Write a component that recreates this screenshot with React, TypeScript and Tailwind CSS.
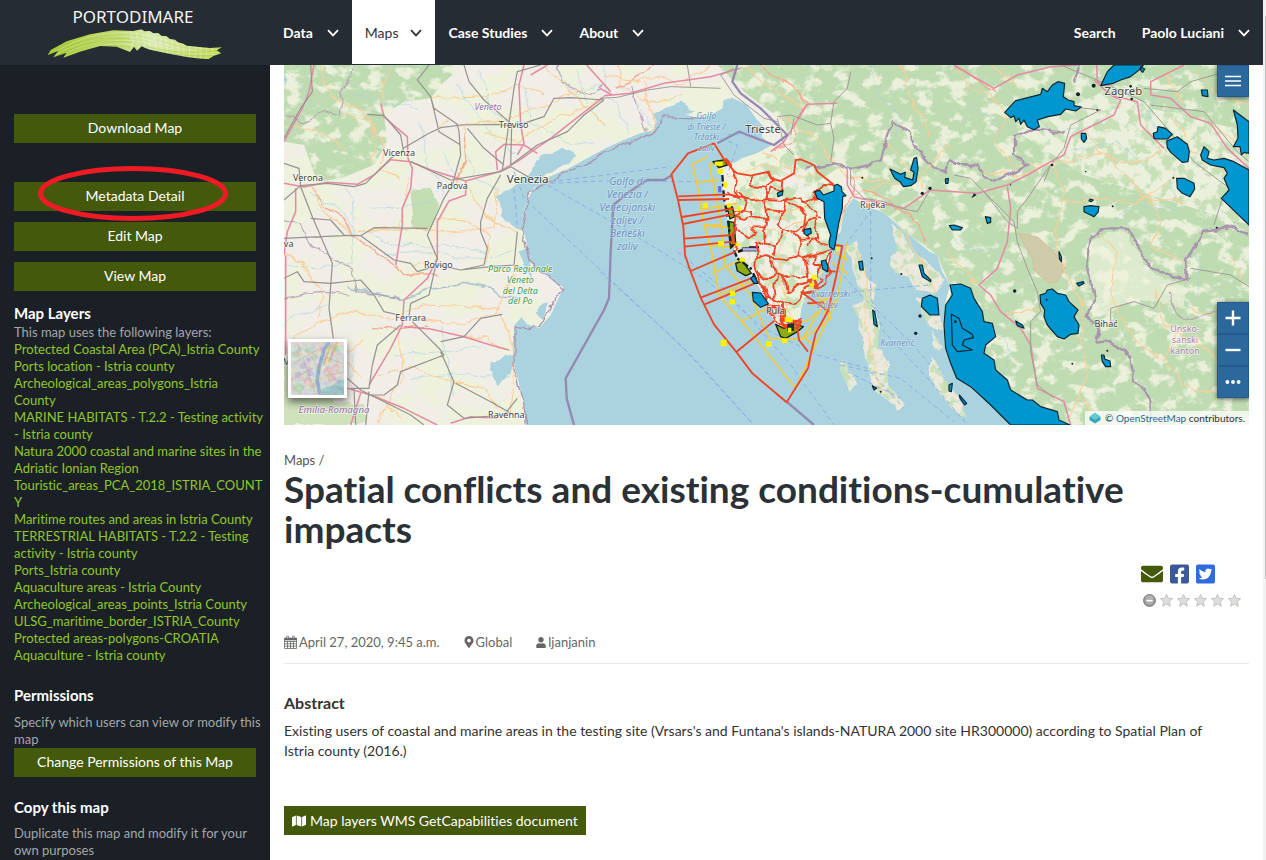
import React from "react";
import { FaEnvelope, FaFacebookSquare, FaMap, FaMapMarkerAlt, FaTwitterSquare, FaUser } from "react-icons/fa";

const layers = [
  "Protected Coastal Area (PCA)_Istria County",
  "Ports location - Istria county",
  "Archeological_areas_polygons_Istria\nCounty",
  "MARINE HABITATS - T.2.2 - Testing activity\n- Istria county",
  "Natura 2000 coastal and marine sites in the\nAdriatic Ionian Region",
  "Touristic_areas_PCA_2018_ISTRIA_COUNT\nY",
  "Maritime routes and areas in Istria County",
  "TERRESTRIAL HABITATS - T.2.2 - Testing\nactivity - Istria county",
  "Ports_Istria county",
  "Aquaculture areas - Istria County",
  "Archeological_areas_points_Istria County",
  "ULSG_maritime_border_ISTRIA_County",
  "Protected areas-polygons-CROATIA",
  "Aquaculture - Istria county",
];

function Chevron() {
  return (
    <svg viewBox="0 0 12 8" className="h-2 w-3" fill="none" stroke="currentColor" strokeWidth="1.8" aria-hidden="true">
      <path d="M1 1.2 6 6.4 11 1.2" />
    </svg>
  );
}

function Logo() {
  const ribs = Array.from({ length: 15 }, (_, i) => 405 + i * 17);
  return (
    <a href="#" className="flex w-[270px] shrink-0 flex-col items-center pt-1.5 text-white">
      <span className="pr-1 font-['Noto_Sans',sans-serif] text-[17px] font-normal leading-[22px] text-gray-100">PORTODIMARE</span>
      <svg viewBox="141 84 528 96" className="h-8 w-44" aria-hidden="true">
        <defs>
          <linearGradient id="wave" x1="0" x2="1">
            <stop offset="0" stopColor="#a3c832" />
            <stop offset=".4" stopColor="#c0da6c" />
            <stop offset=".6" stopColor="#d8e9ac" />
            <stop offset="1" stopColor="#bcd64c" />
          </linearGradient>
          <clipPath id="waveClip">
            <path d="M143 166 152 150 200 124 270 103 340 91 400 93 424 88 434 94 450 93 460 100 474 99 484 107 500 109 510 117 525 119 534 127 550 131 560 137 630 144 666 142 650 151 664 160 640 168 625 178 590 175 560 171 500 160 450 149 436 144 425 139 411 152 402 140 390 156 350 140 300 138 240 155 190 173 200 158 160 172 175 152Z" />
          </clipPath>
        </defs>
        <g clipPath="url(#waveClip)">
          <rect x="141" y="84" width="528" height="96" fill="url(#wave)" />
          <g fill="none" stroke="#fff" strokeOpacity=".6" strokeWidth="1.6">
            <path d="M145 170C230 110 320 92 405 100S540 150 668 148M155 172C235 122 320 104 400 112S540 162 668 156M172 172C245 132 320 116 400 122S540 168 668 164M190 172C255 142 320 126 400 134" />
            {ribs.map((x) => (
              <path key={x} d={`M${x - 20} 84Q${x} 120 ${x - 8} 180`} />
            ))}
          </g>
          <g fill="none" stroke="#9cc02c" strokeOpacity=".6" strokeWidth="2">
            <path d="M150 168C220 125 300 106 390 116M165 172C240 130 310 116 395 127M185 174C250 142 320 128 390 142M440 140C510 156 570 162 655 152M450 148C520 166 580 170 640 166" />
          </g>
        </g>
      </svg>
    </a>
  );
}

const westLand =
  "M0 0H2895V1080H2188L2140 1030 2040 945 1998 880 1983 800 1983 720 1998 660 1975 620 1958 568 1938 560 1888 520 1850 470 1810 445 1748 425 1708 400 1678 440 1670 500 1640 530 1633 565 1638 600 1598 640 1575 682 1553 722 1545 780 1508 792 1478 780 1448 730 1440 692 1415 650 1363 595 1348 545 1333 490 1328 440 1318 390 1312 335 1300 292 1325 285 1350 295 1375 280 1420 265 1465 240 1433 215 1440 185 1415 160 1388 120 1345 98 1318 105 1315 130 1270 155 1228 155 1190 142 1150 146 1115 175 1108 196 1068 205 1018 225 968 248 908 280 850 312 800 333 765 350 740 385 725 425 714 485 727 530 735 590 790 632 838 668 800 750 765 788 730 778 712 756 692 780 685 850 692 910 706 960 718 1010 725 1080H0Z";

const forest =
  "M0 0H540L470 60 440 100 360 110 300 150 310 230 270 300 170 340 100 350 60 240 0 230ZM1300 0H2895V200L2600 130 2500 60 2200 200 2400 330 2895 480V1080H2188L2140 1030 2040 945 1998 880 1998 660 1958 568 1888 520 1748 400 1700 310 1660 310 1600 350 1540 300 1500 170 1380 80ZM380 380 440 370 465 420 440 490 390 490Z";

const midForest = "M2200 200 2500 60 2600 130 2895 200V480L2400 330Z";

const islands =
  "M1683 548 1718 530 1730 575 1748 640 1778 660 1765 700 1785 780 1782 850 1812 895 1812 960 1860 1020 1845 1035 1760 960 1745 870 1735 800 1705 720 1740 705 1700 580ZM1823 478 1855 500 1885 560 1935 600 1985 650 1950 690 1900 670 1880 635 1835 630 1815 600 1840 550ZM1900 700 1960 740 1985 800 1930 780ZM1665 880 1690 900 1720 960 1700 980 1670 920ZM1938 790 1975 850 1960 860ZM1938 880 2010 980 2050 1060 2010 1040 1938 940Z";

function MapDrawing() {
  return (
    <svg
      viewBox="0 0 2895 1080"
      preserveAspectRatio="xMidYMid slice"
      className="absolute inset-0 h-full w-full"
      role="img"
      aria-label="Map of the northern Adriatic"
    >
      <defs>
        <filter id="rough" x="-2%" y="-2%" width="104%" height="104%">
          <feTurbulence type="fractalNoise" baseFrequency=".022" numOctaves="3" seed="4" />
          <feDisplacementMap in="SourceGraphic" scale="26" xChannelSelector="R" yChannelSelector="G" />
        </filter>
        <filter id="wavy" x="-2%" y="-2%" width="104%" height="104%" colorInterpolationFilters="sRGB">
          <feTurbulence type="fractalNoise" baseFrequency=".02" numOctaves="2" seed="9" />
          <feDisplacementMap in="SourceGraphic" scale="34" xChannelSelector="R" yChannelSelector="G" />
        </filter>
        <filter id="dense" x="0" y="0" width="100%" height="100%" colorInterpolationFilters="sRGB">
          <feTurbulence type="fractalNoise" baseFrequency=".02 .026" numOctaves="5" seed="11" />
          <feColorMatrix values="0 0 0 0 .745  0 0 0 0 .86  0 0 0 0 .70  0 0 0 7 -2.4" />
          <feComposite in2="SourceAlpha" operator="in" />
        </filter>
        <filter id="sparse" x="0" y="0" width="100%" height="100%" colorInterpolationFilters="sRGB">
          <feTurbulence type="fractalNoise" baseFrequency=".006 .008" numOctaves="4" seed="8" />
          <feColorMatrix values="0 0 0 0 .935  0 0 0 0 .95  0 0 0 0 .865  0 0 0 9 -4.1" />
          <feComposite in2="SourceAlpha" operator="in" />
        </filter>
        <filter id="flecks" x="0" y="0" width="100%" height="100%" colorInterpolationFilters="sRGB">
          <feTurbulence type="fractalNoise" baseFrequency=".03" numOctaves="4" seed="21" />
          <feColorMatrix values="0 0 0 0 .78  0 0 0 0 .88  0 0 0 0 .72  0 0 0 7 -3.3" />
          <feComposite in2="SourceAlpha" operator="in" />
        </filter>
      </defs>

      <rect width="2895" height="1080" fill="#aad3df" />
      <path d={westLand} fill="#f1eee8" />
      <path d={westLand} fill="#000" filter="url(#sparse)" />
      <path d={islands} fill="#ece9dc" filter="url(#rough)" />
      <path d={islands} fill="#000" filter="url(#flecks)" />
      <path d={midForest} fill="#ebf0dc" />
      <path d={midForest} fill="#000" filter="url(#flecks)" />
      <path d={forest} fill="#ebf0db" />
      <path d={forest} fill="#000" filter="url(#dense)" />
      <path
        d="M1400 290 1520 250 1600 350 1690 370 1650 500 1620 620 1540 760 1490 770 1440 680 1370 580 1340 440Z"
        fill="#000"
        filter="url(#flecks)"
      />
      <path d="M0 880 60 860 150 1010 240 1020 250 1080H0Z" fill="#cfe2bb" filter="url(#rough)" />
      <path d="M385 380 440 368 465 420 440 492 388 492Z" fill="#c3deb3" filter="url(#rough)" />
      <path d="M2202 505 2260 515 2310 560 2345 610 2320 650 2290 655 2250 615 2245 580Z" fill="#cfcba8" stroke="#d9b79a" strokeWidth="2" />
      <path d="M2420 530 2470 500 2530 500 2570 590 2640 640 2700 660 2700 730 2560 700 2480 740 2430 760 2420 640Z" fill="#eff2dc" fillOpacity=".65" filter="url(#rough)" />

      {/* lagoons and estuaries */}
      <g fill="#aad3df" filter="url(#rough)">
        <path d="M640 390 700 360 735 330 770 270 830 250 880 265 850 300 790 325 745 375 725 420 712 490 690 480 650 450ZM620 890 690 870 680 930 640 960 618 920ZM700 560 730 550 745 640 720 600ZM765 720 795 715 780 765 762 750ZM1100 150 1145 130 1190 115 1230 140 1170 150 1110 180ZM0 30 12 40 0 65Z" />
      </g>

      {/* rivers */}
      <g fill="none" stroke="#a9d3e2" strokeWidth="2.600" strokeOpacity=".7" filter="url(#rough)">
        <path d="M5 15 60 65 90 140M260 80 210 90 310 115 400 130M405 170 420 240 430 300 480 390M470 260 500 310 520 330M250 430 380 425 450 410M260 500 320 540 520 545 610 560M300 570 420 560 560 580 690 560M0 600 110 610 200 590 210 520 205 400 180 360M70 390 170 430 215 500M520 60 600 180 690 270M590 20 620 140 690 180M720 60 740 170 860 240 930 230M830 30 870 90 950 60M880 10 900 100 960 180M540 240 570 340 640 370M590 840 480 860 330 870M380 940 520 930 680 940M470 780 490 900 510 990M0 780 70 740 130 720M160 880 130 990M210 850 200 950M990 60 1040 80 1100 190M960 0 970 90 1010 140 1040 210M2620 80 2590 150 2640 210 2700 250 2740 300M2550 120 2600 170 2660 240M2480 470 2560 420 2680 440 2660 350M2730 560 2750 620 2740 690 2700 720M2270 720 2330 780 2370 850M2140 780 2180 860 2160 930M2060 120 2150 180 2120 260M1990 500 2060 560 2150 540M1760 0 1780 90 1850 150 1830 260M2300 200 2400 190 2460 160M2360 260 2500 230 2580 300" />
        <path d="M190 665 290 690 360 700 440 670 540 655 620 670 650 695 700 695" stroke="#94b4cd" strokeWidth="5" />
      </g>

      {/* minor roads */}
      <g fill="none" stroke="#fccf98" strokeWidth="3.400" filter="url(#rough)">
        <path d="M105 0 120 60 165 110 230 135 270 180 265 290M180 140 260 170 300 230 290 310 350 340M290 115 300 50 320 0M440 95 500 100 600 95 700 60 780 90M520 180 600 175 760 130 900 70M540 180 545 290 520 350M460 200 500 170M0 190 90 190 190 250M550 370 600 450 700 500M240 500 380 490 500 500 630 490 640 370M80 370 130 450 210 510M380 600 460 590M0 830 90 780 200 740 330 760 420 720 560 725 650 730M390 760 540 780 640 740 690 630M530 815 610 820 640 850 680 860M650 740 690 860 690 960 680 1040M280 930 380 910 500 950 600 970 640 1030M270 990 350 1060M340 790 360 930 280 1070M220 500 350 480 360 400 380 340M0 560 60 600 120 700 100 760M240 820 170 870 230 940M450 460 560 470 620 520 600 600M600 200 700 230 800 170 960 100M780 0 900 120 960 180M960 30 1060 50 1120 30 1180 60 1280 0M1000 0 1010 60 1100 110 1200 90M1080 50 1110 200" />
        <path d="M1390 0 1440 60 1570 130M1850 0 1890 110 1940 210M1480 150 1600 220 1650 300 1700 340 1800 350M1440 260 1540 330 1600 330M1700 390 1800 360 1900 350 1960 280 1990 240M1800 220 1860 300 1920 370M1320 340 1440 300 1520 330M1390 480 1480 500 1600 450M1480 500 1490 640 1520 760M1600 470 1660 500 1680 430M1390 380 1490 460 1640 380M2010 0 2050 60 2120 90 2170 150 2130 230 2190 300M2190 300 2310 300 2440 260 2540 300 2640 260M2400 190 2450 260 2540 340 2580 400 2700 410M2310 300 2340 400 2310 520 2360 660 2400 720 2390 820 2410 900 2390 1000 2350 1060M2340 410 2460 400 2560 420 2620 370 2680 340M2590 400 2630 470 2600 540 2700 590M2440 500 2500 560 2480 700 2560 830 2640 890 2700 960 2790 980M2640 890 2680 800 2720 760M2610 670 2640 780 2760 850 2840 910M2780 160 2850 240 2895 260M2660 150 2720 250 2760 290 2840 320M2120 0 2200 60M2640 20 2700 120M2730 20 2780 70 2895 120M2100 320 2220 330 2280 300M2170 740 2240 740 2270 730M2390 1000 2450 1070M2720 730 2890 780M2840 580 2870 640M1990 560 2080 660M1850 480 1960 680M1720 560 1755 660 1740 760 1790 980" />
      </g>
      <g fill="none" stroke="#f5a98c" strokeWidth="4" filter="url(#rough)">
        <path d="M85 370 130 430 180 460 205 510 330 600 370 630 460 630M260 785 350 790 430 780M540 200 545 280 525 350M1120 0 1000 70M1740 370 1790 385 1840 430 1890 460 1930 530M1700 330 1710 390 1640 480M1415 0 1480 30 1530 70 1570 115 1535 165 1530 230 1470 260M2010 5 2060 30 2140 85" />
      </g>

      {/* motorways */}
      <g fill="none" stroke="#e58aa3" strokeWidth="4.600" strokeLinejoin="round">
        <path d="M90 0 75 80 55 130 0 230M290 115 300 155 340 190 370 215 372 280 385 310 380 370 355 430 355 480 335 600M0 355 60 366 130 352 220 358 270 330 320 284 380 290 440 315 520 340 545 348 640 322 700 290 800 220 960 95M640 315 635 260 660 238 720 240 760 265M545 348 545 390 495 408 460 470 460 580 430 640 360 705 355 780 320 850 255 960M360 785 440 792 540 815 620 840 675 855M190 970 260 990 360 1030 460 1080M500 1075 560 1055 640 1060M0 570 10 500 35 440 35 370M5 570 5 870M230 985 200 1080M720 0 705 60 710 180 720 235 700 270M960 92 1040 85 1140 55 1280 35 1370 10M1540 160 1570 118 1660 115M1570 118 1500 230 1460 260M948 70 985 90M790 0 740 30M908 0 980 80" />
        <path d="M2010 0 2060 30 2130 70 2200 30 2300 5 2380 0M2430 45 2480 90 2510 105 2490 150 2430 180 2360 215 2340 270 2300 290 2230 330 2170 360 2080 385 1938 375M2480 90 2560 110 2570 180 2640 250M2600 90 2660 100 2720 155 2780 175 2830 250 2895 310M2438 0 2440 50 2480 70M2600 90 2600 50 2700 0M2170 365 2180 430 2170 530 2140 610 2085 660 2120 690 2150 740 2210 790 2240 840 2260 970 2340 1010 2360 1080M1690 310 1690 360 1710 395 1770 410 1860 430 1938 375" />
      </g>

      {/* railways */}
      <g fill="none" stroke="#959290" strokeWidth="3.600" strokeLinejoin="round">
        <path d="M80 0 85 80 50 130 0 220M250 148 300 152 350 210 358 255 320 280 290 310 245 355 210 365 130 355 50 362 0 405M0 295 45 310 50 365 85 455 145 595 135 730 148 820M358 250 435 205 470 188 530 180 640 178 690 185 780 155 810 100 860 98 960 105M440 95 450 130 520 178 525 200 530 270 505 360 480 400 430 510 460 580 435 690 380 715 375 755M435 0 400 45 440 95 465 200 530 240M380 290 500 345 650 320 680 305 740 340M680 300 683 180M680 300 760 240 850 200 900 150 960 105M655 315 690 70 700 20 770 0M540 0 555 50 600 105 680 175M550 190 600 250 660 300M650 330 610 400 590 470 590 500 610 550 600 600 530 615 460 600M80 460 140 465 180 510 230 512 330 585 380 595 400 620 450 605M0 520 60 517 180 512 230 512 270 488 430 490M0 640 40 620 60 650 140 655 230 645 270 690 300 740 345 750M385 770 470 855 480 870 350 920 340 960 300 990 260 990M350 780 280 840 265 900 255 970 200 970M470 860 510 950 490 1020 540 1060 660 1050 700 1000M530 615 620 605 690 600 700 500M470 830 540 815 590 760 655 748M190 940 230 975 380 1050 420 1080M210 970 215 1080M255 980 245 1080M515 955 620 1010 690 1050" />
        <path d="M948 100 1000 97 1090 75 1160 65 1310 70M1350 10 1310 30 1350 90 1440 160 1480 170M1480 155 1520 150 1600 180 1640 175 1650 110 1690 70 1700 20M1210 0 1220 65M1640 175 1650 220 1640 290 1680 310M1480 160 1500 240 1530 270M1530 160 1520 210M1700 310 1700 360 1740 400 1800 410 1850 430 1900 440 1938 375M2310 120 2450 135 2360 180 2340 250 2300 300 2230 400 2200 440 2200 490M2330 0 2450 50 2580 110 2640 180 2730 290 2810 350 2880 400M2300 300 2280 350M2010 330 2060 340 2130 410 2190 470 2200 530 2230 610 2260 680 2270 740 2240 770 2240 860 2260 960 2310 1000M2600 120 2760 140 2860 260 2895 290M2580 70 2680 80 2720 50 2790 30 2895 0M2100 380 2170 470 2200 490M2480 780 2480 730 2550 710 2610 730 2650 660 2720 640M2720 610 2840 630 2895 665M2815 400 2790 480" stroke="#a39c97" strokeWidth="3" />
      </g>

      {/* administrative borders */}
      <g fill="none" stroke="#ab93af" strokeLinejoin="round" filter="url(#rough)">
        <path d="M0 150 60 170 130 140 165 150 175 80 215 0M0 470 50 480 90 550 130 570 200 610 220 680 350 700M0 700 100 680 200 690M820 0 840 60 920 90 960 60M1040 60 1060 130 1090 200M2660 680 2680 750 2720 760 2800 740" strokeWidth="3.500" strokeOpacity=".75" />
        <path d="M727 1080 718 1010 690 900 690 780 730 790 765 788 838 668 735 590 714 485 740 380 960 262 1108 205 1140 155 1260 160" strokeWidth="4" />
        <path d="M1570 310 1640 300 1700 310 1790 290 1810 210 1830 175 1870 200 1890 240 1938 300 1980 320 2000 285 2060 310 2080 300 2100 330 2130 350 2180 325 2230 300 2190 270 2190 210 2250 190 2340 200M2370 50 2390 0M2440 830 2450 780 2410 760 2430 700 2410 600 2420 520 2460 490 2530 490 2560 530 2570 580 2650 630 2710 645 2710 580 2760 500 2830 490 2895 505M2440 830 2480 825 2540 880 2550 950 2600 1000 2600 1080" strokeWidth="7" />
      </g>
      <path
        d="M870 1080 848 1000 845 940 960 735 975 700 980 560 988 420 1030 385 1090 345 1140 345 1165 330M1300 235 1365 200 1470 240 1510 210 1430 130 1370 85 1345 50 1360 0M1508 1010 1590 1080"
        fill="none"
        stroke="#9489ae"
        strokeWidth="7"
        strokeLinejoin="round"
      />

      {/* ferry lines */}
      <g fill="none" stroke="#86a9e6" strokeWidth="2.600" strokeDasharray="14 10">
        <path d="M800 350 948 332 1160 305M800 355 948 348 1290 350M790 360 948 450 1100 540 1260 640 1440 790 1600 870 1750 910 1860 1030M690 320 720 400 960 625 1230 880 1410 1080M948 620 1180 830 1400 1070M1180 560 1330 680 1520 900 1650 1080M1310 220 1360 240 1330 330M1440 200 1330 210M1760 440 1760 700 1800 800 1940 950 2050 1080M1560 700 1760 675 1938 660M1630 580 1740 700 1880 830 1938 900M1670 560 1760 440M1690 920 1850 1000M1670 900 1850 940 2010 1070M690 370 700 480" />
      </g>

      {/* yellow planning lines */}
      <g fill="none" stroke="#f3cb3c" strokeWidth="5" strokeLinejoin="round">
        <path d="M1270 275 1225 298 1238 350 1260 480 1285 570 1305 690 1370 765 1535 970 1585 860 1660 700 1688 535M1310 285 1276 298 1280 320 1300 410 1312 490 1322 600 1400 690 1455 820 1555 822 1630 700 1580 720M1238 352 1305 345M1253 434 1360 415M1260 483 1350 488M1272 540 1355 548M1285 625 1380 580M1305 690 1425 640M1370 770 1450 730M1590 670 1640 760 1560 820M1555 815 1590 840M1620 745 1650 710M1640 590 1690 625M1650 560 1690 585M1260 480 1310 480M1500 780 1570 768 1600 740" />
      </g>

      {/* protected areas along the coast */}
      <g fill="#8cab15" stroke="#162018" strokeWidth="4" strokeLinejoin="round">
        <path d="M1287 290 1320 285 1330 300 1305 308ZM1335 470 1350 472 1355 535 1340 550 1335 510ZM1355 595 1375 588 1402 625 1385 632 1360 618ZM1475 778 1500 790 1525 775 1558 785 1540 800 1505 820 1490 815ZM1330 430 1345 425 1352 455 1338 462Z" />
      </g>
      <path d="M1315 330 1320 400 1330 450 1340 530 1360 580 1400 610 1420 650 1440 670" fill="none" stroke="#10222c" strokeWidth="7" strokeDasharray="20 6 8 12" />
      <path d="M1362 560 1385 552 1420 550M1395 548H1425" stroke="#111" strokeWidth="8" />
      <path d="M1375 548H1422V558H1375Z" fill="#b9b4ea" stroke="#222" strokeWidth="2" />
      <path d="M1302 363H1312V382H1302Z" fill="#6670d8" />

      {/* municipal borders of Istria */}
      <g fill="none" stroke="#f04524" strokeWidth="5.600" strokeLinejoin="round">
        <path d="M1290 235 1212 265 1162 328 1182 405 1198 485 1203 570 1220 620 1250 698 1290 778 1358 862 1405 925 1508 1012 1572 910 1582 860 1595 805 1632 738 1655 640 1675 543 1648 540M1290 235 1318 280 1350 318 1360 325 1400 332 1455 320 1460 340 1490 348 1530 325 1535 285 1550 283 1590 300 1600 320 1650 360" />
        <path d="M1183 394 1330 388 1385 398M1185 405 1335 402M1194 456 1350 430M1197 477 1352 446M1201 521 1345 510M1202 545 1345 530M1220 618 1355 560M1250 698 1415 635M1262 718 1425 650M1358 860 1470 768M1572 860 1545 825 1540 790M1632 738 1550 680M1655 620 1630 618M1570 715 1620 712" />
        <path d="M1350 318 1362 345 1355 380 1365 400 1330 388M1362 380 1400 405 1450 400 1440 370 1470 350 1455 325M1400 332 1402 360 1440 365M1450 400 1460 370 1490 380 1495 350M1455 402 1500 405 1550 400 1560 420 1600 400 1590 380 1620 360 1650 362M1385 398 1375 430 1400 435 1405 460 1450 465 1448 435 1440 405M1355 455 1380 465 1400 455M1450 435 1500 440 1505 410M1350 440 1375 430M1355 490 1400 520 1415 515 1400 490 1440 490 1445 460M1440 490 1442 530 1480 535 1495 490 1475 470 1500 440M1495 490 1530 500 1560 480 1565 450 1540 430 1500 405M1560 480 1600 460 1595 435 1560 420M1600 460 1620 460M1442 530 1415 540 1420 580 1415 620 1450 640 1480 630 1465 600 1470 575 1450 570 1420 580M1470 575 1510 580 1540 570 1550 530 1530 500M1480 535 1475 570M1550 530 1600 530 1625 540M1540 570 1560 580 1570 625 1550 635 1500 640 1480 630M1500 640 1505 680 1540 660 1570 650 1570 625M1560 580 1590 570 1610 560 1640 550M1590 570 1585 600 1610 600 1600 630 1620 640 1600 660M1610 600 1640 560 1632 600 1630 660 1600 670 1570 650M1565 480 1555 500 1570 530M1600 465 1595 490 1600 520 1575 545M1430 645 1450 690 1470 700 1465 660 1490 640M1470 700 1500 715 1530 720 1550 700 1555 670 1580 660M1450 690 1445 720 1490 725 1495 760 1530 770 1560 765M1500 715 1500 760M1375 430 1355 455 1350 490 1350 530 1360 560M1318 280 1340 300 1350 318M1415 620 1430 645 1445 700 1460 740 1480 770 1550 780" filter="url(#wavy)" />
        <path d="M1450 735 1470 725 1485 740 1465 750ZM1490 765 1550 770 1540 790 1500 785ZM1555 685 1590 680M1570 650 1590 640 1600 665 1580 660" strokeWidth="8" />
      </g>
      <path d="M1510 776h20v22h-20z" fill="#17303c" />
      <g fill="#fff200">
        <path d="M1256 413h16v16h-16zM1302 528h18v14h-18zM1338 678h15v15h-15zM1337 702h16v16h-16zM1310 824h18v20h-18zM1446 829h18v16h-18zM1494 820h16v14h-16zM1584 630h14v14h-14zM1292 290h24v12h-24zM1318 350h12v18h-12zM1300 312h18v14h-18zM1358 425h12v14h-12zM1657 545h11v12h-11zM1330 414h10v14h-10zM1367 580h16v10h-16zM1502 757h24v14h-24zM1355 535h14v8h-14zM1576 655h14v10h-14zM1512 788h10v14h-10z" />
      </g>

      {/* blue protected polygons */}
      <g fill="#0096cf" stroke="#0e2530" strokeWidth="3.500" strokeLinejoin="round">
        <path d="M1592 380 1608 376 1618 390 1650 378 1650 362 1660 358 1672 365 1674 380 1686 392 1676 395 1675 430 1664 475 1655 530 1650 555 1637 545 1635 530 1640 510 1622 460 1620 410 1600 400Z" />
        <path d="M1405 682 1430 684 1453 716 1430 727 1408 708ZM1560 494 1580 490 1582 505 1568 512 1560 505ZM1612 588 1625 585 1632 605 1630 620 1616 612ZM1400 640 1410 630 1422 655 1410 655ZM1480 385 1497 376 1495 390 1482 395ZM1724 590 1735 588 1738 615 1728 615ZM1766 735 1772 740 1780 785 1770 778ZM1905 600 1915 600 1920 625 1940 645 1940 650 1915 635ZM1765 962 1778 970 1770 975Z" />
        <path d="M1818 312 1830 318 1850 328 1864 322 1862 337 1886 345 1890 322 1880 315 1890 280 1898 278 1902 310 1896 350 1880 362 1858 365 1848 350 1832 340Z" />
        <path d="M2162 142 2195 107 2270 88 2275 70 2290 80 2305 60 2322 50 2342 55 2338 95 2352 105 2370 110 2370 122 2392 126 2375 138 2345 132 2330 148 2292 155 2260 165 2266 185 2250 194 2230 185 2220 165 2210 178 2205 160 2195 170 2190 152 2180 158Z" />
        <path d="M2450 62 2470 20 2490 0H2578L2565 15 2540 35 2510 45 2488 55ZM2570 5 2582 12 2576 22 2570 16Z" />
        <path d="M2608 205 2620 200 2622 185 2645 190 2665 208 2650 222 2620 222 2610 220ZM2648 228 2680 215 2710 238 2716 260 2712 290 2695 292 2660 262 2650 248Z" />
        <path d="M2678 340 2700 340 2730 355 2732 372 2718 395 2695 385 2680 370ZM2750 270 2760 245 2775 260 2770 280 2790 285 2820 280 2850 290 2895 315V480L2812 400 2835 375 2820 340 2830 325 2820 308 2780 300 2755 285ZM2848 135 2895 170V265L2880 262 2872 270 2868 245 2848 245 2862 220 2860 180Z" />
        <path d="M2400 425 2420 422 2445 425 2442 442 2430 455 2400 440ZM2392 205 2405 205 2408 220 2400 232 2392 222ZM2418 402 2428 405 2422 410 2415 408ZM1996 482 2010 480 2035 488 2030 495 2005 495ZM2104 455 2120 458 2120 472 2110 475ZM2378 655 2398 650 2400 655 2385 663ZM2452 870 2460 870 2462 882 2478 888 2480 905 2465 905 2455 890ZM1984 342 1993 340 1992 355 1985 355ZM2752 75 2770 75 2772 95 2755 92Z" />
        <path d="M2268 690 2285 685 2290 675 2305 672 2320 685 2345 690 2355 710 2382 735 2370 755 2385 780 2382 805 2360 808 2340 822 2320 815 2290 780 2280 755 2282 735 2270 715Z" />
        <path d="M1998 660 2030 657 2060 670 2070 700 2095 740 2100 770 2125 775 2135 815 2105 840 2100 865 2130 885 2135 915 2170 945 2180 975 2230 1005 2245 1005 2270 1025 2320 1040 2325 1065 2358 1080H2180L2120 1020 2060 965 2018 940 2000 895 1985 850 1980 780 1985 720 2005 690ZM2002 748 2025 760 2035 790 2065 808 2068 818 2040 825 2035 840 2065 855 2020 860 2005 840Z" />
        <path d="M1938 690 1960 700 1965 750 1938 750 1912 725 1915 700ZM1995 960 2005 955 2002 980 1995 978ZM2026 990 2048 1015 2042 1020 2028 1000ZM2195 768 2215 780 2220 790 2200 782ZM2325 560 2332 575 2332 590 2326 580Z" />
      </g>
      <g fill="#12212b">
        <circle cx="1735" cy="338" r="3" /><circle cx="1938" cy="370" r="5" /><circle cx="1915" cy="385" r="5" /><circle cx="1763" cy="580" r="3" />
        <circle cx="1852" cy="627" r="3" /><circle cx="1908" cy="753" r="5" /><circle cx="1895" cy="805" r="5" /><circle cx="1790" cy="980" r="3" />
        <circle cx="2192" cy="678" r="5" /><circle cx="2365" cy="896" r="3" /><circle cx="2470" cy="857" r="3" /><circle cx="2288" cy="704" r="3" />
        <circle cx="2014" cy="770" r="4" /><circle cx="2405" cy="320" r="2" /><circle cx="2486" cy="424" r="3" /><circle cx="2440" cy="135" r="3" />
        <circle cx="2540" cy="64" r="4" /><circle cx="2543" cy="102" r="4" /><circle cx="2429" cy="62" r="6" /><circle cx="2382" cy="88" r="6" />
        <circle cx="2304" cy="300" r="4" /><circle cx="2180" cy="360" r="2" /><circle cx="2668" cy="338" r="3" /><circle cx="2798" cy="488" r="3" />
        <path d="M2062 400 2070 385 2078 390Z" />
      </g>

      {/* place names */}
      <g
        className="font-['Noto_Sans',sans-serif]"
        textAnchor="middle"
        fontSize="27"
        fill="#454545"
        stroke="#fff"
        strokeOpacity=".65"
        strokeWidth="5"
        strokeLinejoin="round"
        paintOrder="stroke"
      >
        <text x="345" y="272">Vicenza</text>
        <text x="72" y="349">Verona</text>
        <text x="505" y="371">Padova</text>
        <text x="689" y="190">Treviso</text>
        <text x="731" y="353" fontSize="35">Venezia</text>
        <text x="463" y="608">Rovigo</text>
        <text x="380" y="768">Ferrara</text>
        <text x="667" y="1059">Ravenna</text>
        <text x="14" y="546">va</text>
        <text x="8" y="900">M</text>
        <text x="1437" y="203" fontSize="34">Trieste</text>
        <text x="1766" y="430">Rijeka</text>
        <text x="2518" y="90" fontSize="34">Zagreb</text>
        <text x="2466" y="785">Bihać</text>
        <text x="1474" y="746">Pula</text>
        <g fontStyle="italic" fill="#9470a6">
          <text x="612" y="134">Veneto</text>
          <text x="150" y="1043" fontSize="29">Emilia-Romagna</text>
        </g>
        <g fontStyle="italic" fill="#3f9a46">
          <text x="709" y="622">Parco Regionale</text>
          <text x="709" y="654">Veneto</text>
          <text x="709" y="686">del Delta</text>
          <text x="709" y="718">del Po</text>
        </g>
        <g fontStyle="italic" fill="#6f94c4" strokeOpacity=".3">
          <text x="1267" y="163" fontSize="25">Golfo</text>
          <text x="1267" y="195" fontSize="25">di Trieste /</text>
          <text x="1267" y="226" fontSize="25">Tržaški</text>
          <text x="1267" y="258" fontSize="25">zaliv</text>
          <text x="1030" y="361" fontSize="31">Golfo di</text>
          <text x="1030" y="400" fontSize="31">Venezia /</text>
          <text x="1030" y="438" fontSize="31">Venecijanski</text>
          <text x="1030" y="477" fontSize="31">zaljev /</text>
          <text x="1030" y="516" fontSize="31">Beneški</text>
          <text x="1030" y="555" fontSize="31">zaliv</text>
          <text x="1840" y="843" fontSize="24">Kvarnerić</text>
          <text x="1640" y="697" fontSize="25">Kvarnerski</text>
          <text x="1630" y="729" fontSize="25">zaljev</text>
        </g>
        <g fill="#aa84a8">
          <text x="2703" y="802">Unsko-</text>
          <text x="2703" y="834">sanski</text>
          <text x="2703" y="866">kanton</text>
        </g>
      </g>
    </svg>
  );
}

function BasemapPreview() {
  return (
    <svg viewBox="0 0 53 53" className="h-full w-full" aria-hidden="true">
      <defs>
        <filter id="speckle" x="0" y="0" width="100%" height="100%" colorInterpolationFilters="sRGB">
          <feTurbulence type="fractalNoise" baseFrequency=".2" numOctaves="3" seed="5" />
          <feColorMatrix values=".6 0 0 0 .5  0 .6 0 0 .5  0 0 .6 0 .5  0 0 0 0 .4" />
        </filter>
      </defs>
      <rect width="53" height="53" fill="#d8dcd6" />
      <g fill="#b0d2a8">
        <circle cx="8" cy="46" r="5" /><circle cx="23" cy="15" r="3" /><circle cx="17" cy="8" r="3" /><circle cx="5" cy="12" r="3" /><circle cx="44" cy="6" r="4" /><circle cx="22" cy="44" r="3" />
      </g>
      <g fill="#e9c3b8">
        <circle cx="37" cy="30" r="5" /><circle cx="45" cy="26" r="4" /><circle cx="41" cy="37" r="4" /><circle cx="17" cy="40" r="4" /><circle cx="28" cy="7" r="3" />
      </g>
      <g fill="#bdb4d8">
        <circle cx="12" cy="24" r="3" /><circle cx="20" cy="31" r="3" /><circle cx="7" cy="33" r="3" /><circle cx="17" cy="18" r="2" />
      </g>
      <path d="M40 2 35 16 32 24M46 0 38 20" stroke="#e9a95c" strokeWidth="2" fill="none" />
      <path d="M2 22 18 12 36 4M0 38 22 26M34 34 52 30M36 28 50 44M6 0 24 50M32 14 52 22" stroke="#cf8a8a" strokeWidth=".6" fill="none" />
      <path d="M38 0 33 8 29 22 26 38 29 53" stroke="#729cc4" fill="none" strokeWidth="3.500" />
      <path d="M29 53 32 46 40 44 48 38H53V53Z" fill="#7fb9c4" />
      <rect width="53" height="53" filter="url(#speckle)" />
    </svg>
  );
}

function MapPanel() {
  const tool = "flex h-8 w-8 items-center justify-center border border-[#245a8e] bg-[#2c689c] text-white";
  return (
    <section className="relative h-[360px] overflow-hidden bg-[#aad3df]" aria-label="Map preview">
      <MapDrawing />
      <button aria-label="Switch basemap" className="absolute bottom-[27px] left-1 h-[59px] w-[59px] border-[3px] border-white bg-white shadow-[0_4px_8px_rgba(0,0,0,0.55)]">
        <BasemapPreview />
      </button>
      <button aria-label="Menu" className={`absolute right-0 top-0 shadow-[0_1px_5px_rgba(0,0,0,0.6)] ${tool}`}>
        <svg viewBox="0 0 16 12" className="h-3 w-4" stroke="currentColor" strokeWidth="1.6" aria-hidden="true">
          <path d="M0 1.5h16M0 6h16M0 10.5h16" />
        </svg>
      </button>
      <div className="absolute bottom-[27px] right-0 flex flex-col shadow-[0_1px_5px_rgba(0,0,0,0.6)]">
        <button aria-label="Zoom in" className={tool}>
          <svg viewBox="0 0 16 16" className="h-4 w-4" stroke="currentColor" strokeWidth="2.4" aria-hidden="true"><path d="M.5 8h15M8 .5v15" /></svg>
        </button>
        <button aria-label="Zoom out" className={tool}>
          <svg viewBox="0 0 16 16" className="h-4 w-4" stroke="currentColor" strokeWidth="2.4" aria-hidden="true"><path d="M.5 8h15" /></svg>
        </button>
        <button aria-label="More tools" className={tool}>
          <svg viewBox="0 0 16 16" className="h-4 w-4" fill="currentColor" aria-hidden="true"><circle cx="2.4" cy="8" r="1.9" /><circle cx="8" cy="8" r="1.9" /><circle cx="13.6" cy="8" r="1.9" /></svg>
        </button>
      </div>
      <div className="absolute bottom-0 right-0 flex h-3.5 items-center gap-1 bg-white/75 px-1 text-[10px] leading-[14px] text-[#333]">
        <svg viewBox="0 0 12 12" className="h-3 w-3" aria-hidden="true">
          <path d="M6 1 11.500 5V8L6 11.500.5 8V5Z" fill="#3aa6bd" />
          <path d="M6 .5 11.500 4.500 6 8 .5 4.500Z" fill="#62cad6" />
        </svg>
        <span>
          © <a href="#" className="text-[#2c689c]">OpenStreetMap</a> contributors.
        </span>
      </div>
    </section>
  );
}

function Rating() {
  return (
    <div className="flex items-center gap-1" aria-label="Rating">
      <button aria-label="Clear rating" className="h-[13px] w-[13px]">
        <svg viewBox="0 0 13 13" aria-hidden="true">
          <circle cx="6.500" cy="6.500" r="6" fill="#959595" stroke="#858585" />
          <circle cx="6.500" cy="6" r="4.600" fill="#b2b2b2" />
          <rect x="3" y="5.200" width="7" height="2.800" fill="#fff" stroke="#888" strokeWidth=".6" />
        </svg>
      </button>
      {[1, 2, 3, 4, 5].map((n) => (
        <button key={n} aria-label={`${n} stars`} className="h-[13px] w-[13px]">
          <svg viewBox="0 0 13 13" aria-hidden="true">
            <path d="M6.500.4 8.200 4.300 12.600 4.700 9.300 7.700 10.300 12.200 6.500 9.900 2.700 12.200 3.700 7.700.4 4.700 4.800 4.300Z" fill="#dedfdd" stroke="#bdbdbb" strokeWidth=".9" />
          </svg>
        </button>
      ))}
    </div>
  );
}

function CalendarIcon() {
  return (
    <svg viewBox="0 0 13 14" className="h-3.5 w-[13px]" fill="none" stroke="currentColor" aria-hidden="true">
      <path d="M.5 3.500h12v10H.5ZM.5 6.500h12M.5 8.800h12M.5 11.200h12M3.500 6v7.500M6.500 6v7.500M9.500 6v7.500" strokeWidth=".8" />
      <path d="M.5 3h12v2H.5Z" fill="currentColor" strokeWidth=".6" />
      <path d="M3.500.8v3M9.500.8v3" strokeWidth="2.200" />
      <path d="M3.500 1.300v2M9.500 1.300v2" stroke="#fff" strokeWidth=".7" />
    </svg>
  );
}

function SideButton({ children }: { children: React.ReactNode }) {
  return <button className="block h-[29px] w-full bg-[#44590c] pb-0.5 text-sm leading-[27px] text-white">{children}</button>;
}

const nav = ["Data", "Maps", "Case Studies", "About"];

export default function App() {
  return (
    <div className="flex h-screen overflow-hidden bg-white font-['Lato',sans-serif] [font-variant-ligatures:none]">
      <div className="flex min-w-0 flex-1 flex-col">
        <header className="flex h-[65px] shrink-0 bg-[#262c33] text-sm font-bold text-white">
          <Logo />
          <nav className="flex h-16 flex-1">
            {nav.map((item) => (
              <a
                key={item}
                href="#"
                className={
                  item === "Maps"
                    ? "flex items-center gap-3 bg-white px-[13px] pt-0.5 font-normal text-[#333]"
                    : "flex items-center gap-3.5 px-[13px] pt-0.5"
                }
              >
                {item}
                <Chevron />
              </a>
            ))}
            <div className="ml-auto flex items-center pt-0.5">
              <a href="#" className="px-[13px]">Search</a>
              <a href="#" className="flex items-center gap-3.5 px-[13px]">
                Paolo Luciani
                <Chevron />
              </a>
            </div>
          </nav>
        </header>

        <div className="flex min-h-0 flex-1">
          <aside className="w-[270px] shrink-0 overflow-hidden bg-[#1a2026] px-3.5 pt-[49px] text-[13px] leading-[17px] text-[#a4a6a8]">
            <SideButton>Download Map</SideButton>
            <div className="mt-[39px] flex flex-col gap-[11px]">
              <div className="relative">
                <SideButton>Metadata Detail</SideButton>
                <svg viewBox="0 0 190 55" className="pointer-events-none absolute -top-4 left-6 h-[55px] w-[190px]" aria-hidden="true">
                  <ellipse cx="95" cy="27.500" rx="92.500" ry="25" fill="none" stroke="#ed1c24" strokeWidth="5" />
                </svg>
              </div>
              <SideButton>Edit Map</SideButton>
              <SideButton>View Map</SideButton>
            </div>
            <h2 className="mt-3 text-[15px] font-bold leading-[21px] text-white">Map Layers</h2>
            <p>This map uses the following layers:</p>
            <ul>
              {layers.map((name) => (
                <li key={name} className="whitespace-pre">
                  <a href="#" className="text-[#91c62a]">{name}</a>
                </li>
              ))}
            </ul>
            <h2 className="mt-[21px] text-[15px] font-bold leading-[21px] text-white">Permissions</h2>
            <p className="mt-2 whitespace-nowrap">
              Specify which users can view or modify this
              <br />
              map
            </p>
            <SideButton>Change Permissions of this Map</SideButton>
            <h2 className="mt-5 text-[15px] font-bold leading-[21px] text-white">Copy this map</h2>
            <p className="mt-[7px] whitespace-nowrap">
              Duplicate this map and modify it for your
              <br />
              own purposes
            </p>
          </aside>

          <main className="min-w-0 flex-1 overflow-hidden px-3.5 text-sm text-[#333]">
            <MapPanel />
            <div className="mt-[26px] text-[13px] leading-[18px] text-[#555]">
              <a href="#">Maps</a> /
            </div>
            <h1 className="text-[37px] font-bold leading-10 text-[#2c3137]">
              Spatial conflicts and existing conditions-cumulative impacts
            </h1>
            <div className="mt-[13px] flex flex-col items-end gap-2 pr-2">
              <div className="flex h-6 items-center gap-[7px] pr-[26px]">
                <a href="#" aria-label="Email" className="text-[#44590c]"><FaEnvelope className="h-[22px] w-[22px]" /></a>
                <a href="#" aria-label="Facebook" className="text-[#3b5998]"><FaFacebookSquare className="h-[22px] w-[19px]" /></a>
                <a href="#" aria-label="Twitter" className="text-[#2f6bdc]"><FaTwitterSquare className="h-[22px] w-[19px]" /></a>
              </div>
              <Rating />
            </div>
            <div className="mt-[25px] flex gap-6 border-b border-[#e9e9e9] pb-[11px] text-[13px] leading-5 text-[#666]">
              <span className="flex items-center gap-0.5"><CalendarIcon />April 27, 2020, 9:45 a.m.</span>
              <span className="flex items-center gap-0.5"><FaMapMarkerAlt className="h-3 w-2.5" />Global</span>
              <span className="flex items-center gap-0.5"><FaUser className="h-[11px] w-2.5" />ljanjanin</span>
            </div>
            <h2 className="mt-[29px] text-base font-bold leading-5">Abstract</h2>
            <p className="mt-2 pr-5 leading-5">
              Existing users of coastal and marine areas in the testing site (Vrsars's and Funtana's islands-NATURA 2000 site HR300000) according to Spatial Plan of Istria county (2016.)
            </p>
            <a href="#" className="mt-[45px] inline-flex h-[29px] items-center gap-1 bg-[#44590c] px-2 text-white">
              <FaMap className="h-3.5 w-[14px]" />
              Map layers WMS GetCapabilities document
            </a>
          </main>
        </div>
      </div>
      <div className="w-[3px] shrink-0 bg-[#f1f1f1] pl-0.5 pt-4" aria-hidden="true">
        <div className="h-2/3 bg-[#c1c1c1]" />
      </div>
    </div>
  );
}
